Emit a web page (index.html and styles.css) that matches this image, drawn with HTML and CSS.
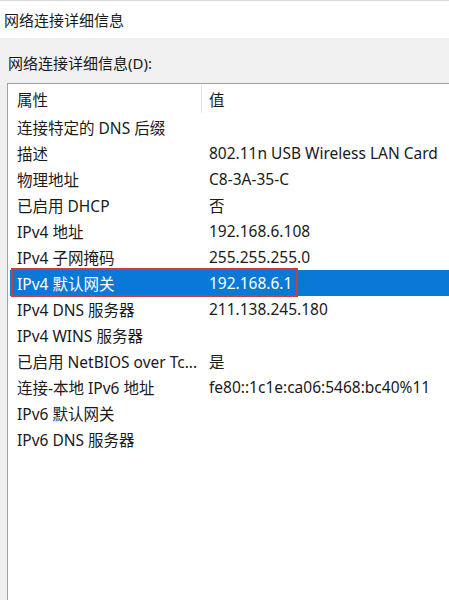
FILE: index.html
```html
<!DOCTYPE html>
<html lang="zh-CN">
  <head>
    <meta charset="UTF-8" />
    <title>网络连接详细信息</title>
    <link rel="stylesheet" href="styles.css">
  </head>
  <body>
    <div class="titlebar">网络连接详细信息</div>
    <div class="dialog">
      <div class="label">网络连接详细信息(D):</div>
      <div class="listbox">
        <div class="header">
          <div class="col-name">属性</div>
          <div class="sep"></div>
          <div class="col-value">值</div>
        </div>
        <div class="row"><div class="col-name">连接特定的 DNS 后缀</div><div class="col-value"></div></div>
        <div class="row"><div class="col-name">描述</div><div class="col-value">802.11n USB Wireless LAN Card</div></div>
        <div class="row"><div class="col-name">物理地址</div><div class="col-value">C8-3A-35-C</div></div>
        <div class="row"><div class="col-name">已启用 DHCP</div><div class="col-value">否</div></div>
        <div class="row"><div class="col-name">IPv4 地址</div><div class="col-value">192.168.6.108</div></div>
        <div class="row"><div class="col-name">IPv4 子网掩码</div><div class="col-value">255.255.255.0</div></div>
        <div class="row selected">
          <div class="col-name">IPv4 默认网关</div><div class="col-value">192.168.6.1</div>
          <div class="mark"></div>
        </div>
        <div class="row"><div class="col-name">IPv4 DNS 服务器</div><div class="col-value">211.138.245.180</div></div>
        <div class="row"><div class="col-name">IPv4 WINS 服务器</div><div class="col-value"></div></div>
        <div class="row"><div class="col-name">已启用 NetBIOS over Tc...</div><div class="col-value">是</div></div>
        <div class="row"><div class="col-name">连接-本地 IPv6 地址</div><div class="col-value">fe80::1c1e:ca06:5468:bc40%11</div></div>
        <div class="row"><div class="col-name">IPv6 默认网关</div><div class="col-value"></div></div>
        <div class="row"><div class="col-name">IPv6 DNS 服务器</div><div class="col-value"></div></div>
      </div>
    </div>
  </body>
</html>
```

FILE: styles.css
```css
html,
body {
  height: 100%;
}
body {
  margin: 0;
  background: #f0f0f0;
  font-family: "Noto Sans", "Noto Sans CJK SC", sans-serif;
  font-size: 15px;
  color: #1a1a1a;
  overflow: hidden;
}

.titlebar {
  height: 38px;
  background: #ffffff;
  border-top: 1px solid #dcdcdc;
  box-sizing: border-box;
  display: flex;
  align-items: center;
  padding-left: 4px;
}

.dialog {
  display: flex;
  flex-direction: column;
  height: calc(100% - 38px);
}
.label {
  height: 45px;
  display: flex;
  align-items: center;
  padding-left: 8px;
  padding-top: 4px;
  box-sizing: border-box;
}
.listbox {
  flex-grow: 1;
  margin-left: 7px;
  background: #ffffff;
  border-top: 1px solid #a0a0a0;
  border-left: 1px solid #a0a0a0;
  font-size: 15.5px;
}

.header,
.row {
  display: flex;
  align-items: center;
  position: relative;
}
.header {
  height: 30px;
}
.row {
  height: 26px;
  margin-left: 2px;
}
.col-name {
  width: 187px;
  padding-left: 7px;
  white-space: nowrap;
}
.header .col-name {
  width: 184px;
  padding-left: 9px;
}
.sep {
  width: 1px;
  height: 28px;
  background: #e3e3e3;
}
.col-value {
  padding-left: 5px;
  white-space: nowrap;
}
.header .col-value {
  padding-left: 7px;
}

.row.selected {
  background: #0a78d7;
  color: #ffffff;
}
.mark {
  position: absolute;
  left: 1px;
  top: -2px;
  width: 287px;
  height: 29px;
  box-sizing: border-box;
  border: 2px solid #c8403c;
  z-index: 1;
}
```
